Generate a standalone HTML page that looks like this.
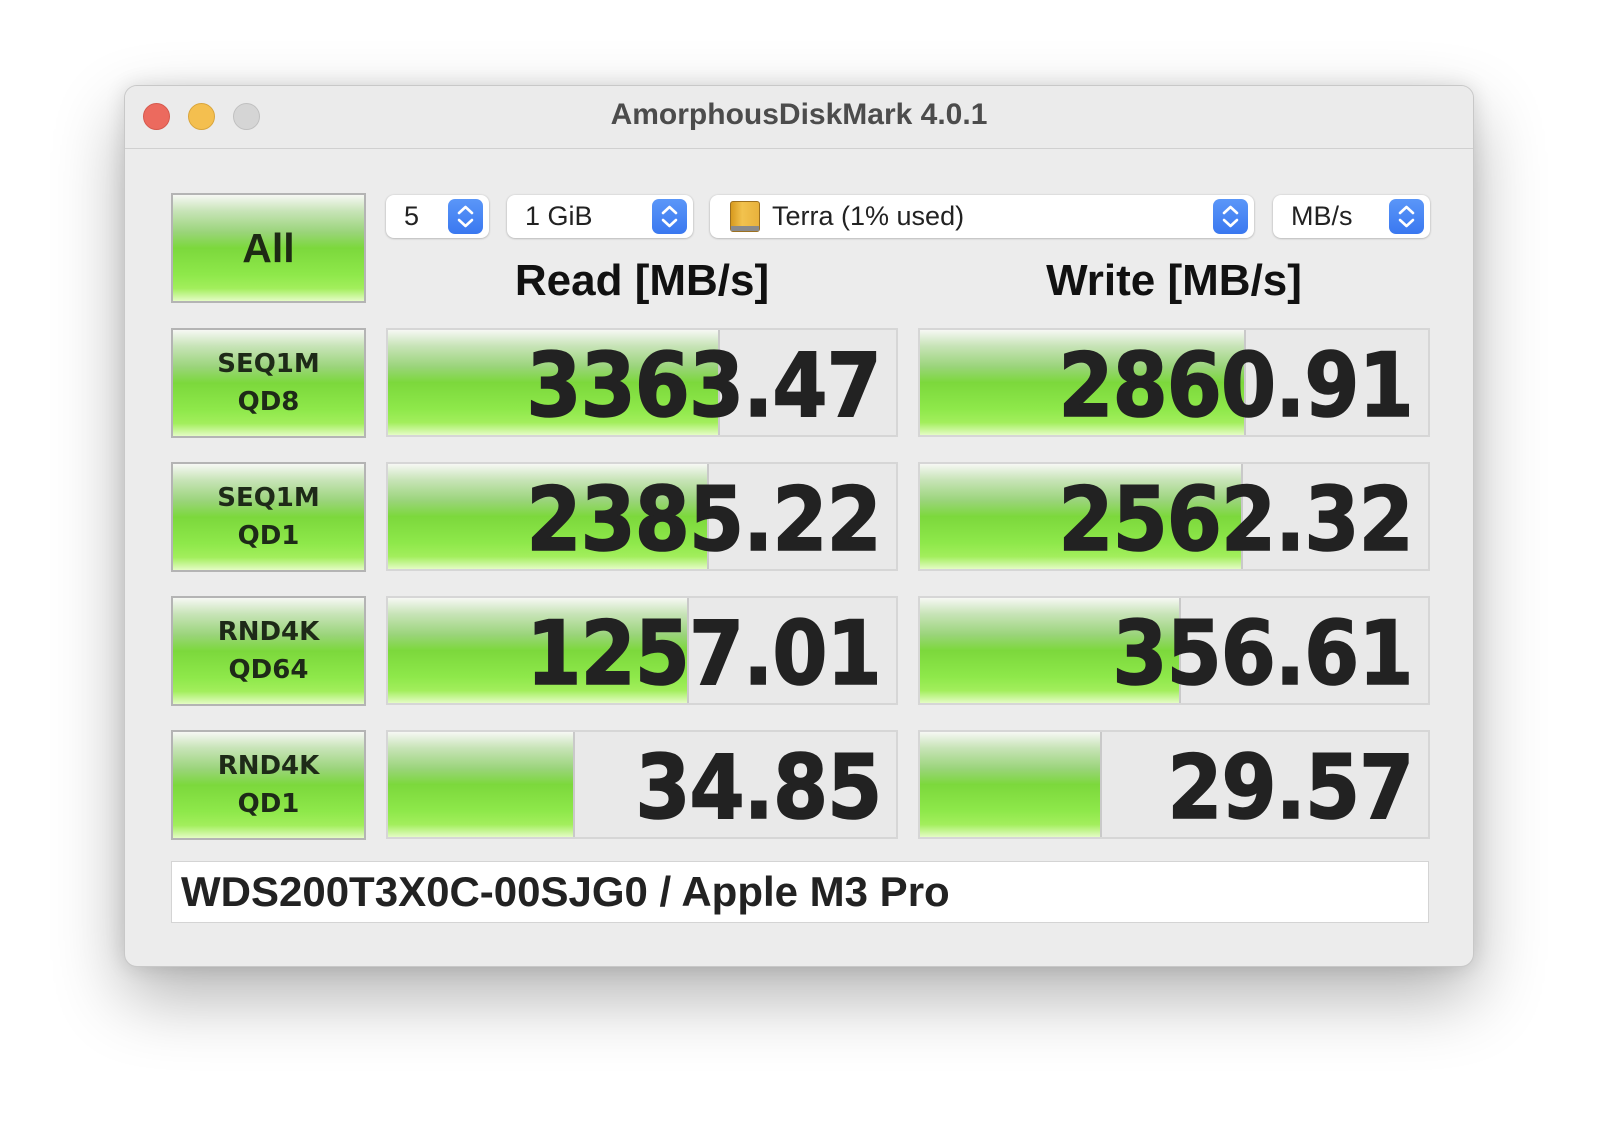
<!DOCTYPE html>
<html><head><meta charset="utf-8"><style>
*{box-sizing:border-box;margin:0;padding:0}
body{width:1600px;height:1135px;background:#fff;position:relative;overflow:hidden;font-family:"Liberation Sans",sans-serif}
.win{position:absolute;left:124px;top:85px;width:1350px;height:882px;background:#ececec;border-radius:13px;border:1px solid #c8c8c8;box-shadow:0 30px 70px rgba(0,0,0,0.3),0 0 20px rgba(0,0,0,0.12);overflow:hidden}
.title{position:absolute;left:0;top:0;width:100%;height:63px;border-bottom:1px solid #d0d0d0;text-align:center;line-height:58px;font-size:30px;font-weight:bold;color:#4c4c4c;background:#ebebeb}
.tl{position:absolute;top:17px;width:27px;height:27px;border-radius:50%}
.g{background:linear-gradient(to bottom,#f6f8f4 0%,#c8e4b8 15%,#9ad47a 35%,#7cd83c 50%,#8ee84a 75%,#a2ee5c 88%,#e4fcc4 100%)}
.btn{position:absolute;left:46px;width:195px;border:2px solid #b4b4b4;display:flex;align-items:center;justify-content:center;text-align:center;font-family:"DejaVu Sans",sans-serif;font-weight:bold;color:#1e2a18;font-size:26px;line-height:38px}
.box{position:absolute;height:109px;border:2px solid #d6d6d6;background:#e9e9e9;overflow:hidden}
.box .f{position:absolute;left:0;top:0;bottom:0;border-right:2px solid #c9c9c9}
.box .n{position:absolute;right:15px;top:3px;height:100%;display:flex;align-items:center;font-family:"DejaVu Sans",sans-serif;font-weight:bold;font-size:88px;color:#222;-webkit-text-stroke:1.6px #222;transform:scaleX(0.9);transform-origin:right center;letter-spacing:-1px}
.dd{position:absolute;top:109px;height:43px;background:#fff;border-radius:8px;box-shadow:0 0.5px 2px rgba(0,0,0,0.3);font-size:27px;color:#222;line-height:43px;padding-left:18px}
.ar{position:absolute;right:6px;top:4px;width:35px;height:35px;border-radius:7px;background:linear-gradient(#5a96f8,#3a78f0)}
.hd{position:absolute;top:170px;font-size:44px;font-weight:bold;color:#111;text-align:center}
</style></head><body>
<div class="win">
 <div class="title">AmorphousDiskMark 4.0.1</div>
 <div class="tl" style="left:18px;background:#ec6a5e;border:1px solid #d5594d"></div>
 <div class="tl" style="left:63px;background:#f4bf4f;border:1px solid #d9a53c"></div>
 <div class="tl" style="left:108px;background:#d5d5d5;border:1px solid #c0c0c0"></div>

 <div class="btn g" style="top:107px;height:110px;font-family:'Liberation Sans',sans-serif;font-size:41px;color:#1e2a14">All</div>

 <div class="dd" style="left:261px;width:103px">5<div class="ar"><svg width="35" height="35" viewBox="0 0 35 35"><path d="M11 14l6.5-6 6.5 6M11 21l6.5 6 6.5-6" stroke="#fff" stroke-width="2.6" fill="none" stroke-linecap="round" stroke-linejoin="round"/></svg></div></div>
 <div class="dd" style="left:382px;width:186px">1 GiB<div class="ar"><svg width="35" height="35" viewBox="0 0 35 35"><path d="M11 14l6.5-6 6.5 6M11 21l6.5 6 6.5-6" stroke="#fff" stroke-width="2.6" fill="none" stroke-linecap="round" stroke-linejoin="round"/></svg></div></div>
 <div class="dd" style="left:585px;width:544px;padding-left:62px">Terra (1% used)
  <div style="position:absolute;left:20px;top:6px;width:30px;height:31px;border-radius:3px;background:linear-gradient(90deg,#d79a1e,#f2c24e 40%,#e8b23c);border:1px solid #9c7020"><div style="position:absolute;left:0;right:0;bottom:0;height:5px;background:#8a8a8a"></div></div>
  <div class="ar"><svg width="35" height="35" viewBox="0 0 35 35"><path d="M11 14l6.5-6 6.5 6M11 21l6.5 6 6.5-6" stroke="#fff" stroke-width="2.6" fill="none" stroke-linecap="round" stroke-linejoin="round"/></svg></div></div>
 <div class="dd" style="left:1148px;width:157px">MB/s<div class="ar"><svg width="35" height="35" viewBox="0 0 35 35"><path d="M11 14l6.5-6 6.5 6M11 21l6.5 6 6.5-6" stroke="#fff" stroke-width="2.6" fill="none" stroke-linecap="round" stroke-linejoin="round"/></svg></div></div>

 <div class="hd" style="left:261px;width:512px">Read [MB/s]</div>
 <div class="hd" style="left:793px;width:512px">Write [MB/s]</div>

 <div class="btn g" style="top:242px;height:110px">SEQ1M<br>QD8</div>
 <div class="btn g" style="top:376px;height:110px">SEQ1M<br>QD1</div>
 <div class="btn g" style="top:510px;height:110px">RND4K<br>QD64</div>
 <div class="btn g" style="top:644px;height:110px">RND4K<br>QD1</div>

 <div class="box" style="left:261px;top:242px;width:512px"><div class="f g" style="width:332px"></div><div class="n">3363.47</div></div>
 <div class="box" style="left:793px;top:242px;width:512px"><div class="f g" style="width:326px"></div><div class="n">2860.91</div></div>
 <div class="box" style="left:261px;top:376px;width:512px"><div class="f g" style="width:321px"></div><div class="n">2385.22</div></div>
 <div class="box" style="left:793px;top:376px;width:512px"><div class="f g" style="width:323px"></div><div class="n">2562.32</div></div>
 <div class="box" style="left:261px;top:510px;width:512px"><div class="f g" style="width:301px"></div><div class="n">1257.01</div></div>
 <div class="box" style="left:793px;top:510px;width:512px"><div class="f g" style="width:261px"></div><div class="n">356.61</div></div>
 <div class="box" style="left:261px;top:644px;width:512px"><div class="f g" style="width:187px"></div><div class="n">34.85</div></div>
 <div class="box" style="left:793px;top:644px;width:512px"><div class="f g" style="width:182px"></div><div class="n">29.57</div></div>

 <div style="position:absolute;left:46px;top:775px;width:1258px;height:62px;background:#fff;border:1px solid #d4d4d4;font-size:42px;font-weight:bold;color:#222;line-height:60px;padding-left:9px">WDS200T3X0C-00SJG0 / Apple M3 Pro</div>
</div>
</body></html>
